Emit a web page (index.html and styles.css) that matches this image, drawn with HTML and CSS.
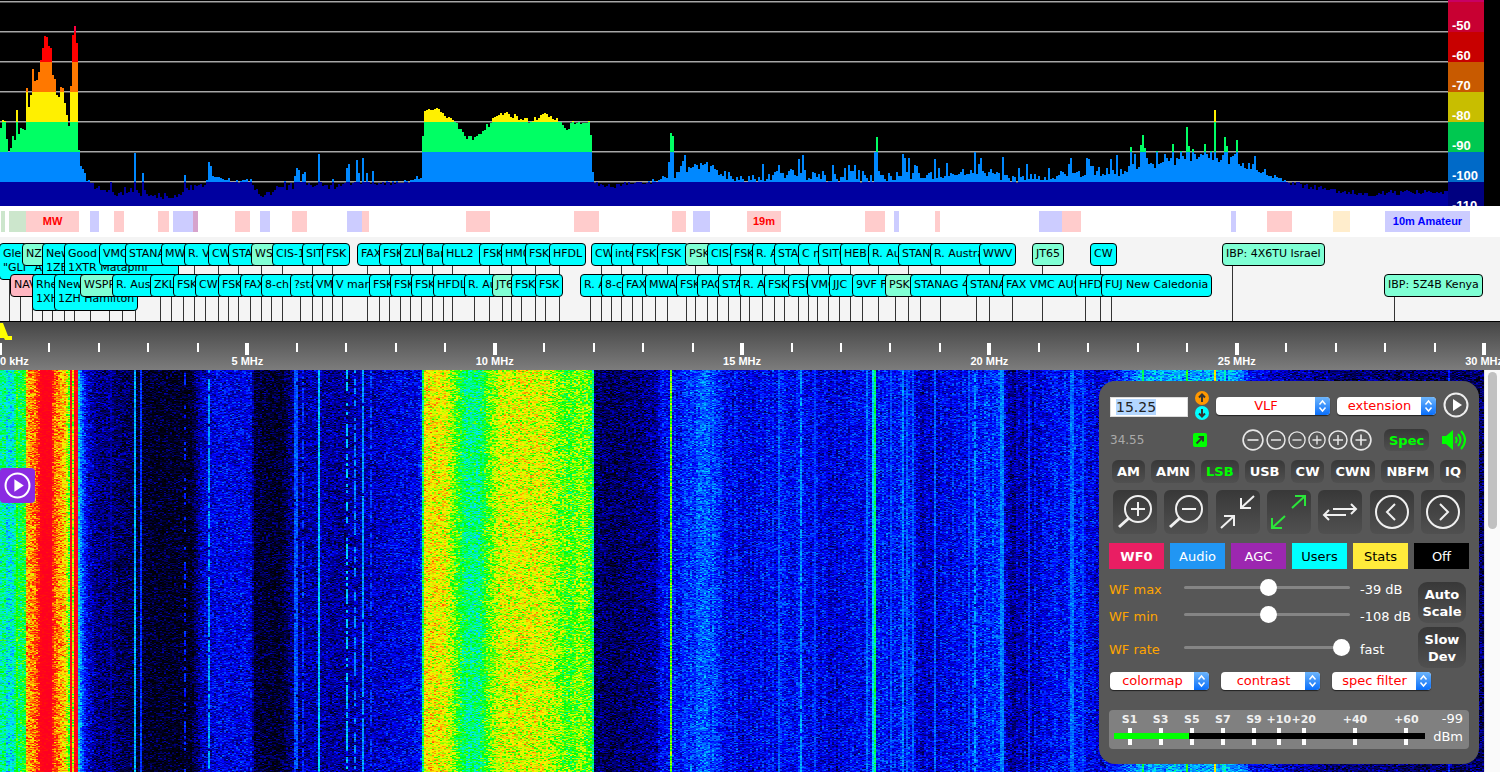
FILE: index.html
```
<!DOCTYPE html>
<html lang="en">
  <head>
    <meta charset="UTF-8" />
    <meta name="viewport" content="width=device-width, initial-scale=1.0" />
    <title>SDR receiver</title>
    <link rel="stylesheet" href="styles.css" />
  </head>
  <body>
    <svg class="symbols" aria-hidden="true">
      <symbol id="updown" viewBox="0 0 14 18">
        <path d="M4 7.500 7 4l3 3.500M4 10.500 7 14l3-3.500" />
      </symbol>
      <symbol id="minus" viewBox="0 0 20 20">
        <circle cx="10" cy="10" r="9" />
        <path d="M5 10h10" />
      </symbol>
      <symbol id="plus" viewBox="0 0 20 20">
        <circle cx="10" cy="10" r="9" />
        <path d="M5 10h10M10 5v10" />
      </symbol>
      <symbol id="play" viewBox="0 0 26 26">
        <circle cx="13" cy="13" r="11.500" />
        <path class="solid" d="M10 7v12l9-6z" />
      </symbol>
    </svg>

    <section class="spectrum">
      <canvas id="spectrum"></canvas>
      <div class="db-scale">
        <span></span>
        <span>-50</span>
        <span>-60</span>
        <span>-70</span>
        <span>-80</span>
        <span>-90</span>
        <span>-100</span>
        <span>-110</span>
      </div>
    </section>

    <section class="bands" id="bands"></section>
    <section class="dx" id="dx"></section>
    <section class="scale" id="scale">
      <svg class="passband" width="14" height="20">
        <path d="M0 1h3l5 13h4v4H5l-1-2H0z" />
      </svg>
    </section>

    <main class="waterfall">
      <canvas id="waterfall"></canvas>
      <div class="scrollbar"><i></i></div>

      <button class="opener" type="button" aria-label="Open">
        <svg><use href="#play" /></svg>
      </button>

      <form class="panel">
        <div class="row tune">
          <input id="freq" type="text" value="15.25" aria-label="Frequency" />
          <div class="steps">
            <button type="button" aria-label="Up" class="up">
              <svg viewBox="0 0 14 14"><path d="M7 11V3.500M4 6.500l3-3 3 3" /></svg>
            </button>
            <button type="button" aria-label="Down" class="down">
              <svg viewBox="0 0 14 14"><path d="M7 3v7.500M4 7.500l3 3 3-3" /></svg>
            </button>
          </div>
          <span class="select wide">
            <select aria-label="Band"><option>VLF</option></select>
            <svg><use href="#updown" /></svg>
          </span>
          <span class="select">
            <select aria-label="Extension"><option>extension</option></select>
            <svg><use href="#updown" /></svg>
          </span>
          <button type="button" class="play" aria-label="Play">
            <svg><use href="#play" /></svg>
          </button>
        </div>

        <div class="row status">
          <span class="cursor">34.55</span>
          <button type="button" class="link" aria-label="Link">
            <svg viewBox="0 0 14 14"><path d="M3.500 10.500 10 4M5.500 4H10v4.500" /></svg>
          </button>
          <div class="zoomers">
            <button type="button" class="l" aria-label="-3"><svg><use href="#minus" /></svg></button>
            <button type="button" class="m" aria-label="-2"><svg><use href="#minus" /></svg></button>
            <button type="button" class="s" aria-label="-1"><svg><use href="#minus" /></svg></button>
            <button type="button" class="s" aria-label="+1"><svg><use href="#plus" /></svg></button>
            <button type="button" class="m" aria-label="+2"><svg><use href="#plus" /></svg></button>
            <button type="button" class="l" aria-label="+3"><svg><use href="#plus" /></svg></button>
          </div>
          <button type="button" class="key on">Spec</button>
          <button type="button" class="mute" aria-label="Mute">
            <svg viewBox="0 0 26 22">
              <path class="solid" d="M1 7h4l7-6v20l-7-6H1z" />
              <path d="M14.500 8q2.500 3 0 6M17 5q5 6 0 12M20 2q8 9 0 18" />
            </svg>
          </button>
        </div>

        <div class="row modes">
          <button type="button" class="key">AM</button>
          <button type="button" class="key">AMN</button>
          <button type="button" class="key on">LSB</button>
          <button type="button" class="key">USB</button>
          <button type="button" class="key">CW</button>
          <button type="button" class="key">CWN</button>
          <button type="button" class="key">NBFM</button>
          <button type="button" class="key">IQ</button>
        </div>

        <div class="row tools">
          <button type="button" class="key" aria-label="Zoom in">
            <svg viewBox="0 0 44 44"><circle cx="25" cy="19" r="13" /><path d="M25 12v14M18 19h14" /><path class="thick" d="M15.500 28.500 6 37" /></svg>
          </button>
          <button type="button" class="key" aria-label="Zoom out">
            <svg viewBox="0 0 44 44"><circle cx="25" cy="19" r="13" /><path d="M18 19h14" /><path class="thick" d="M15.500 28.500 6 37" /></svg>
          </button>
          <button type="button" class="key" aria-label="Max in">
            <svg viewBox="0 0 44 44"><path d="M38 6 25 18M25 8v10h10M5 38l13-12M8 26h10v10" /></svg>
          </button>
          <button type="button" class="key on" aria-label="Max out">
            <svg viewBox="0 0 44 44"><path d="M25 18 38 6M28 6h10v10M18 26 5 38M5 28v10h10" /></svg>
          </button>
          <button type="button" class="key" aria-label="Swap">
            <svg viewBox="0 0 44 44"><path d="M15 19h23M33 14l5 5-5 5M28 25H6M11 20l-5 5 5 5" /></svg>
          </button>
          <button type="button" class="key" aria-label="Page left">
            <svg viewBox="0 0 44 44"><circle cx="22" cy="22" r="16" /><path d="m25 14-8 8 8 8" /></svg>
          </button>
          <button type="button" class="key" aria-label="Page right">
            <svg viewBox="0 0 44 44"><circle cx="22" cy="22" r="16" /><path d="m19 14 8 8-8 8" /></svg>
          </button>
        </div>

        <div class="row tabs">
          <button type="button" class="wf">WF0</button>
          <button type="button" class="audio">Audio</button>
          <button type="button" class="agc">AGC</button>
          <button type="button" class="users">Users</button>
          <button type="button" class="stats">Stats</button>
          <button type="button" class="off">Off</button>
        </div>

        <div class="row sliders">
          <div class="levels">
            <div class="level">
              <label for="wf-max">WF max</label>
              <input id="wf-max" type="range" value="51" />
              <output for="wf-max">-39 dB</output>
            </div>
            <div class="level">
              <label for="wf-min">WF min</label>
              <input id="wf-min" type="range" value="51" />
              <output for="wf-min">-108 dB</output>
            </div>
            <div class="level last">
              <label for="wf-rate">WF rate</label>
              <input id="wf-rate" type="range" value="4" max="4" />
              <output for="wf-rate">fast</output>
            </div>
          </div>
          <div class="side">
            <button type="button" class="key">Auto<br />Scale</button>
            <button type="button" class="key">Slow<br />Dev</button>
          </div>
        </div>

        <div class="row menus">
          <span class="select">
            <select aria-label="Colormap"><option>colormap</option></select>
            <svg><use href="#updown" /></svg>
          </span>
          <span class="select">
            <select aria-label="Contrast"><option>contrast</option></select>
            <svg><use href="#updown" /></svg>
          </span>
          <span class="select">
            <select aria-label="Spectrum filter"><option>spec filter</option></select>
            <svg><use href="#updown" /></svg>
          </span>
        </div>

        <div class="smeter">
          <div class="gauge" id="gauge"><div class="bar"><i></i></div></div>
          <div class="dbm">-99<br />dBm</div>
        </div>
      </form>
    </main>

    <script src="app.js"></script>
  </body>
</html>
```
FILE: styles.css
```
* {
  box-sizing: border-box;
}

body {
  margin: 0;
  height: 100vh;
  display: flex;
  flex-direction: column;
  overflow: hidden;
  background: white;
  font-family: "DejaVu Sans", Verdana, sans-serif;
  font-size: 13px;
}

button,
input,
select {
  font: inherit;
  margin: 0;
  padding: 0;
  border: 0;
}

button {
  background: none;
  color: white;
}

svg {
  display: block;
  fill: none;
  stroke: white;
  stroke-width: 2;
}

.solid {
  fill: white;
  stroke: none;
}

.symbols {
  position: absolute;
  width: 0;
  height: 0;
}

canvas {
  display: block;
}

/* spectrum */
.spectrum {
  display: flex;
  height: 206px;
  padding-right: 16px;
  background: black;
  overflow: hidden;
}

.spectrum canvas {
  flex: 1;
  min-width: 0;
  height: 206px;
}

.db-scale {
  width: 36px;
  color: white;
  font: bold 13px/13px "Liberation Sans", Arial, sans-serif;
}

.db-scale span {
  display: flex;
  align-items: flex-end;
  height: 30px;
  padding-left: 4px;
}

.db-scale span:nth-child(1) { height: 2px; background: #c80064; }
.db-scale span:nth-child(2) { background: #c80032; }
.db-scale span:nth-child(3) { background: #c80000; }
.db-scale span:nth-child(4) { background: #c85a00; }
.db-scale span:nth-child(5) { background: #c8be00; }
.db-scale span:nth-child(6) { background: #00c850; }
.db-scale span:nth-child(7) { background: #006ac8; }
.db-scale span:nth-child(8) { background: #000080; }

/* band bars */
.bands {
  position: relative;
  height: 31px;
}

.band {
  position: absolute;
  top: 5px;
  height: 21px;
  font: bold 11px/21px "Liberation Sans", Arial, sans-serif;
  text-align: center;
  white-space: nowrap;
}

.band.red { background: rgba(255, 0, 0, 0.2); color: red; }
.band.blue { background: rgba(0, 0, 255, 0.2); color: blue; }
.band.green { background: rgba(0, 128, 0, 0.2); }
.band.orange { background: rgba(255, 165, 0, 0.2); }

/* station labels */
.dx {
  position: relative;
  isolation: isolate;
  height: 84px;
  background: #f4f4f4;
  overflow: hidden;
}

.station {
  position: absolute;
  top: 6px;
  padding: 3px 3px 4px;
  border: 1px solid black;
  border-radius: 4px;
  background: cyan;
  font-size: 11px;
  line-height: 14px;
  white-space: pre;
}

.station.low {
  top: 37px;
}

.station.mint { background: aquamarine; }
.station.pink { background: lightpink; }

/* stem down to the frequency scale, behind every label */
.station::before {
  content: "";
  position: absolute;
  z-index: -1;
  left: 9px;
  top: 10px;
  width: 1px;
  height: 80px;
  background: #333;
}

/* frequency scale */
.scale {
  position: relative;
  height: 49px;
  border-top: 1px solid black;
  background: linear-gradient(#464646, #7c7c7c);
  overflow: hidden;
}

.passband {
  position: absolute;
  fill: yellow;
  stroke: none;
}

.tick {
  position: absolute;
  top: 21px;
  width: 60px;
  margin-left: -30px;
  color: white;
  font: bold 11px/12px "Liberation Sans", Arial, sans-serif;
  text-align: center;
}

.tick::before {
  content: "";
  display: block;
  width: 2px;
  height: 9px;
  margin: 0 auto 4px;
  background: white;
}

.tick.major::before {
  width: 4px;
  height: 12px;
  margin-bottom: 0;
}

.tick.first {
  margin-left: 0;
  text-align: left;
}

.tick.first::before {
  margin-left: -2px;
}

/* waterfall */
.waterfall {
  position: relative;
  flex: 1;
  display: flex;
  min-height: 0;
}

.waterfall canvas {
  flex: 1;
  min-width: 0;
  height: 100%;
}

.scrollbar {
  width: 16px;
  padding: 2px 3px;
  border-left: 1px solid #e4e4e4;
  background: #fafafa;
}

.scrollbar i {
  display: block;
  height: 157px;
  border-radius: 5px;
  background: #c1c1c1;
}

.opener {
  position: absolute;
  left: 0;
  top: 98px;
  width: 35px;
  height: 35px;
  padding: 4px;
  border-radius: 4px;
  background: blueviolet;
}

.opener svg {
  width: 27px;
  height: 27px;
}

/* control panel */
.panel {
  position: absolute;
  right: 21px;
  bottom: 8px;
  width: 380px;
  padding: 10px 10px 15px;
  border-radius: 16px;
  background: #575757;
  color: white;
}

.row {
  display: flex;
  align-items: center;
}

.key {
  border-radius: 6px;
  background: linear-gradient(#383838, #505050);
  font-weight: bold;
}

.key.on {
  color: lime;
}

.tune {
  gap: 7px;
  height: 28px;
  padding-left: 1px;
}

#freq {
  width: 78px;
  height: 20px;
  margin-top: 4px;
  padding: 0 5px;
  border: 1px solid #ddd;
  background: white;
  color: #222;
  font-size: 14px;
  outline: none;
}

#freq::selection {
  background: #b4d7ff;
  color: #222;
}

.steps button {
  display: block;
  width: 14px;
  height: 14px;
  margin: 1px 0;
  border-radius: 50%;
}

.steps svg {
  stroke: #333;
}

.steps .up { background: #ff9800; }
.steps .down { background: cyan; }

.select {
  position: relative;
  width: 99px;
  height: 18px;
}

.select.wide {
  width: 114px;
}

.tune .select {
  margin-top: 2px;
}

.select select {
  display: block;
  appearance: none;
  width: 100%;
  height: 18px;
  padding-right: 14px;
  border-radius: 4px;
  background: white;
  box-shadow: 0 1px 1px #222;
  color: red;
  line-height: 18px;
  text-align-last: center;
}

.select svg {
  position: absolute;
  right: 0;
  top: 0;
  width: 15px;
  height: 18px;
  border-radius: 0 4px 4px 0;
  background: linear-gradient(#6db5fb, #0a6ffb);
  stroke-width: 1.5;
  pointer-events: none;
}

.play svg {
  width: 26px;
  height: 26px;
  stroke: #eee;
}

.status {
  height: 24px;
  margin-top: 9px;
}

.cursor {
  width: 84px;
  padding-left: 1px;
  color: #aaa;
  font-size: 12px;
}

.link {
  width: 14px;
  height: 14px;
  border-radius: 2px;
  background: lime;
}

.link svg {
  stroke: #333;
}

.zoomers {
  display: flex;
  align-items: center;
  gap: 2px;
  margin-left: 35px;
}

.zoomers svg {
  stroke: #e6e6e6;
  stroke-width: 1.5;
}

.zoomers .l svg { width: 22px; height: 22px; }
.zoomers .m svg { width: 20px; height: 20px; }
.zoomers .s svg { width: 18px; height: 18px; }

.status .key {
  height: 22px;
  margin: 0 12px;
  padding: 0 5px;
}

.mute svg {
  width: 26px;
  height: 22px;
  stroke: lime;
}

.mute .solid {
  fill: lime;
}

.modes {
  justify-content: space-between;
  margin-top: 8px;
  padding: 0 3px;
}

.modes .key {
  height: 23px;
  padding: 0 5px;
}

.tools {
  justify-content: space-between;
  margin-top: 7px;
  padding: 0 4px;
}

.tools .key {
  width: 44px;
  height: 44px;
}

.tools svg {
  stroke: #f0f0f0;
}

.tools .on svg {
  stroke: #2be53a;
}

.tools .thick {
  stroke-width: 3;
}

.tabs {
  gap: 6px;
  margin-top: 9px;
}

.tabs button {
  flex: 1;
  height: 26px;
}

.tabs .wf { background: #e91e63; font-weight: bold; }
.tabs .audio { background: #2196f3; }
.tabs .agc { background: #9c27b0; }
.tabs .users { background: cyan; color: black; }
.tabs .stats { background: #ffeb3b; color: black; }
.tabs .off { background: black; }

.sliders {
  align-items: flex-start;
  margin-top: 13px;
}

.levels {
  flex: 1;
}

.level {
  display: flex;
  align-items: center;
  height: 15px;
  margin-bottom: 12px;
}

.level.last {
  margin-top: 18px;
}

.level label {
  width: 75px;
  color: orange;
}

.level output {
  margin-left: 10px;
  white-space: nowrap;
}

.level input {
  appearance: none;
  width: 166px;
  height: 17px;
  margin-bottom: 4px;
  background: none;
}

.level input::-webkit-slider-runnable-track {
  height: 3px;
  border-radius: 2px;
  background: #858585;
}

.level input::-webkit-slider-thumb {
  appearance: none;
  width: 17px;
  height: 17px;
  margin-top: -7px;
  border-radius: 50%;
  background: white;
}

.side {
  display: flex;
  flex-direction: column;
  gap: 4px;
  width: 48px;
  margin-right: 3px;
}

.side .key {
  height: 41px;
  border-radius: 9px;
  line-height: 17px;
}

.menus {
  gap: 12px;
  margin-top: 3px;
  padding-left: 1px;
}

.smeter {
  display: flex;
  height: 39px;
  margin-top: 20px;
  border-radius: 4px;
  background: #808080;
}

.gauge {
  position: relative;
  flex: 1;
  margin-left: 5px;
}

.mark {
  position: absolute;
  top: 3px;
  width: 30px;
  margin-left: -15px;
  color: #f0f0f0;
  font-size: 11px;
  font-weight: bold;
  line-height: 13px;
  text-align: center;
}

.mark::after {
  content: "";
  display: block;
  width: 4px;
  height: 17px;
  margin: 2px auto 0;
  background: white;
}

.bar {
  position: absolute;
  z-index: 1;
  top: 23px;
  width: 100%;
  height: 6px;
  background: black;
}

.bar i {
  display: block;
  width: 24%;
  height: 6px;
  background: lime;
}

.dbm {
  width: 44px;
  padding-right: 6px;
  line-height: 18px;
  text-align: right;
}
```
FILE: app.js
```
// Horizontal positions are given on a 1500 unit wide display.
const SPAN = 1500;
const pct = (x) => (x / SPAN) * 100 + "%";

let seed = 7;
function rnd() {
  seed = (seed * 1664525 + 1013904223) >>> 0;
  return seed / 4294967296;
}

function add(parent, className, text, left) {
  const el = document.createElement("div");
  el.className = className;
  el.textContent = text;
  el.style.left = left;
  parent.appendChild(el);
  return el;
}

// ---- band bars: start, end, colour, name
const bands = [
  [1, 5, "green"], [9, 26, "green"], [26, 79, "red", "MW"], [90, 99, "blue"],
  [114, 124, "red"], [158, 169, "red"], [173, 198, "blue"], [193, 198, "red"],
  [235, 250, "red"], [260, 270, "blue"], [292, 307, "red"], [347, 362, "blue"],
  [362, 369, "red"], [466, 490, "red"], [574, 599, "red"], [672, 686, "red"],
  [693, 710, "blue"], [747, 781, "red", "19m"], [865, 885, "red"],
  [894, 899, "blue"], [935, 940, "red"], [1039, 1062, "blue"],
  [1062, 1081, "red"], [1231, 1236, "blue"], [1267, 1292, "red"],
  [1333, 1350, "orange"], [1385, 1470, "blue", "10m Amateur"],
];
for (const [from, to, color, name] of bands) {
  add(document.getElementById("bands"), "band " + color, name || "", pct(from)).style.width = pct(to - from);
}

// ---- station labels: position, text, colour
const high = [
  [-1, 'Glen\n"GLI" AU'], [22, "NZH", "mint"], [42, "News\n1ZB Z"],
  [64, "Good News Radio T\n1XTR Matapihi"], [99, "VMC"], [125, "STANAG"],
  [161, "MWA"], [184, "R. Va"], [208, "CW"], [228, "STAN"],
  [251, "WSP", "mint"], [272, "CIS-1"], [302, "SITO"], [322, "FSK"],
  [357, "FAX"], [379, "FSK"], [400, "ZLM"], [422, "Bar"], [442, "HLL2  "],
  [479, "FSK"], [501, "HM0"], [525, "FSK"], [549, "HFDL"], [591, "CW "],
  [611, "inte"], [632, "FSK "], [657, "FSK "], [685, "PSK", "mint"],
  [707, "CIS-"], [730, "FSK"], [752, "R. Au"], [774, "STAN"], [798, "C m"],
  [818, "SITO"], [840, "HEB "], [868, "R. Aus"], [898, "STANA"],
  [930, "R. Austra"], [979, "WWV"], [1032, "JT65", "mint"], [1090, "CW"],
  [1222, "IBP: 4X6TU Israel", "mint"],
];
const low = [
  [10, "NAV", "pink"], [32, "Rhe\n1XH"], [54, "News\n1ZH Hamilton"],
  [80, "WSPR", "mint"], [112, "R. Aust"], [150, "ZKL"], [173, "FSK"],
  [195, "CW "], [218, "FSK"], [240, "FAX"], [261, "8-ch "], [290, "?sta"],
  [312, "VMC"], [332, "V mark"], [369, "FSK"], [390, "FSK"], [411, "FSK"],
  [433, "HFDL"], [464, "R. Au"], [492, "JT6", "mint"], [511, "FSK"],
  [535, "FSK"], [580, "R. A"], [601, "8-ch"], [622, "FAX"], [645, "MWAR"],
  [676, "FSK"], [697, "PAC"], [718, "STA"], [739, "R. Au"], [764, "FSK"],
  [788, "FSK"], [807, "VMC"], [829, "JJC "], [852, "9VF F"],
  [885, "PSK ", "mint"], [910, "STANAG 4"], [966, "STANA"],
  [1002, "FAX VMC AUST"], [1075, "HFDL"], [1101, "FUJ New Caledonia"],
  [1384, "IBP: 5Z4B Kenya", "mint"],
];
const dx = document.getElementById("dx");
for (const [x, text, color] of high) add(dx, "station " + (color || ""), text, pct(x));
for (const [x, text, color] of low) add(dx, "station low " + (color || ""), text, pct(x));

// ---- frequency scale, 0 to 30 MHz
const scale = document.getElementById("scale");
for (let mhz = 0; mhz <= 30; mhz++) {
  const major = mhz % 5 == 0;
  const text = mhz == 0 ? "0 kHz" : major ? mhz + " MHz" : "";
  const className = "tick" + (major ? " major" : "") + (mhz == 0 ? " first" : "");
  add(scale, className, text, pct(mhz * 49.47));
}

// ---- s-meter marks, in percent of the bar
const marks = [
  ["S1", 5], ["S3", 15], ["S5", 25], ["S7", 35], ["S9", 45],
  ["+10", 53], ["+20", 61], ["+40", 77.5], ["+60", 94],
];
for (const [text, at] of marks) add(document.getElementById("gauge"), "mark", text, at + "%");

// linear interpolation in a list of points that is sorted by its first value
function at(points, x) {
  let i = 1;
  while (i < points.length - 1 && points[i][0] < x) i++;
  const [x0, y0] = points[i - 1];
  const [x1, y1] = points[i];
  const t = Math.min(1, Math.max(0, (x - x0) / (x1 - x0)));
  return y0 + (y1 - y0) * t;
}

// ---- spectrum
const trace = [
  [0, 128], [2, 120], [3, 113], [5, 128], [7, 150], [9, 154], [11, 142], [12, 136],
  [14, 140], [15, 134], [18, 134], [20, 128], [22, 129], [25, 130],
  [26, 88], [28, 107], [30, 95], [32, 69], [33, 82], [36, 80], [38, 72],
  [40, 60], [41, 52], [43, 43], [44, 36], [46, 37], [47, 45], [50, 48],
  [51, 67], [53, 83], [54, 79], [56, 95], [57, 111], [58, 97], [60, 87],
  [62, 88], [63, 95], [65, 110], [67, 119], [69, 133], [70, 86], [72, 35],
  [73, 131], [74, 26], [76, 43], [77, 149], [79, 151], [80, 166], [83, 170],
  [86, 180], [90, 184], [100, 190], [115, 194], [125, 192], [140, 194],
  [160, 198], [180, 195], [190, 191], [200, 186], [208, 181], [212, 178],
  [219, 176], [228, 179], [235, 183], [245, 179], [250, 180], [255, 190],
  [262, 195], [280, 190], [300, 185], [330, 187], [350, 184], [385, 183],
  [400, 182], [410, 180], [416, 178], [420, 179], [421, 170], [422, 134],
  [423, 112], [430, 108], [440, 111], [450, 120], [458, 127], [465, 137],
  [472, 138], [480, 132], [488, 125], [495, 116], [505, 113], [515, 117],
  [530, 121], [536, 119], [542, 112], [550, 118], [557, 118], [562, 127],
  [566, 129], [572, 123], [588, 123], [590, 134], [592, 171], [594, 184],
  [610, 186], [630, 183], [650, 182], [660, 179], [680, 173], [700, 167],
  [715, 170], [730, 178], [760, 179], [790, 173], [820, 178], [860, 179],
  [880, 178], [950, 174], [980, 173], [1010, 180], [1040, 177], [1060, 175],
  [1100, 174], [1120, 172], [1130, 168], [1145, 162], [1152, 168],
  [1160, 164], [1185, 160], [1200, 157], [1230, 161], [1245, 165],
  [1260, 172], [1280, 178], [1290, 183], [1310, 187], [1345, 192],
  [1370, 194], [1400, 192], [1445, 193],
];
const spikes = [
  [16, 110], [110, 182], [134, 166], [135, 153], [142, 173], [185, 175], [209, 162], [211, 166],
  [294, 176], [296, 168], [298, 170], [303, 174], [305, 172], [318, 154],
  [347, 168], [349, 164], [356, 160], [358, 173], [363, 158], [367, 173],
  [372, 171], [670, 133], [672, 136], [799, 159], [802, 155], [874, 152],
  [876, 137], [902, 154], [905, 158], [908, 158], [935, 159], [975, 152],
  [1002, 157], [1070, 158], [1110, 159], [1117, 155], [1131, 147],
  [1140, 145], [1143, 135], [1145, 148], [1157, 151], [1173, 144],
  [1186, 127], [1188, 146], [1192, 149], [1204, 144], [1215, 110],
  [1225, 137], [1236, 140],
];
const dbColors = ["#ff0080", "#ff0040", "#ff0000", "#ff7800", "#fff000", "#00ff64", "#0088ff", "#0000a0"];

function drawSpectrum() {
  const canvas = document.getElementById("spectrum");
  const w = (canvas.width = canvas.clientWidth);
  const h = (canvas.height = canvas.clientHeight);
  const k = document.body.clientWidth / SPAN;
  const ctx = canvas.getContext("2d");

  ctx.fillStyle = "black";
  ctx.fillRect(0, 0, w, h);
  for (let y = 1; y < h; y += 30) {
    ctx.fillStyle = "#a8a8a8";
    ctx.fillRect(0, y, w, 1);
    ctx.fillStyle = "#505050";
    ctx.fillRect(0, y + 1, w, 1);
  }

  for (let px = 0; px < w; px += 2) {
    const x = px / k;
    let y = at(trace, x);
    if (x > 660 && x < 1265) {
      y += 4 - rnd() * 9;
      if (rnd() < 0.22) y -= rnd() * 15;
    } else if (x > 84) {
      y += 2.5 - rnd() * 5;
      if (x < 420 && y > 185 && rnd() < 0.3) y -= rnd() * 6;
    }
    for (const [sx, sy] of spikes) {
      if (Math.floor(sx / 2) == Math.floor(x / 2)) y = Math.min(y, sy);
    }
    y = Math.round(y);
    for (let i = 0; i < dbColors.length; i++) {
      const top = Math.max(y, i == 0 ? 0 : 2 + (i - 1) * 30);
      const end = 2 + i * 30;
      if (end > top) {
        ctx.fillStyle = dbColors[i];
        ctx.fillRect(px, top, 2, end - top);
      }
    }
  }
}

// ---- waterfall: position, level
const floor = [
  [0, 0.56], [4, 0.57], [6, 0.5], [12, 0.52], [14, 0.57], [25, 0.64], [26, 0.85], [34, 0.89],
  [38, 0.97], [41, 1], [50, 1], [54, 0.91], [60, 0.86], [65, 0.81], [68, 0.68],
  [70, 0.66], [73, 0.8], [77, 0.62], [78, 0.48], [81, 0.36], [87, 0.23], [96, 0.17], [130, 0.12],
  [145, 0.08], [190, 0.07], [200, 0.21], [215, 0.25], [250, 0.25], [254, 0.1],
  [280, 0.08], [290, 0.16], [310, 0.2], [340, 0.18], [375, 0.22], [418, 0.26],
  [420, 0.3], [422, 0.6], [423, 0.8], [445, 0.78], [455, 0.68], [465, 0.58],
  [478, 0.58], [488, 0.69], [500, 0.76], [525, 0.77], [545, 0.76], [560, 0.7],
  [568, 0.67], [580, 0.71], [591, 0.66], [593, 0.5], [594, 0.14], [615, 0.13], [655, 0.18],
  [660, 0.27], [690, 0.31], [704, 0.36], [714, 0.33], [730, 0.26], [750, 0.25],
  [790, 0.29], [830, 0.24], [870, 0.27], [905, 0.3], [920, 0.23], [970, 0.28],
  [1000, 0.32], [1006, 0.26], [1012, 0.2], [1025, 0.21], [1050, 0.28],
  [1100, 0.25], [1120, 0.3], [1140, 0.42], [1200, 0.43], [1238, 0.42],
  [1250, 0.28], [1290, 0.2], [1340, 0.15], [1484, 0.13],
];
// position, width, level, share of the time that it is on
const carriers = [
  [16, 2, 0.66, 1], [70, 2, 1, 1], [74, 4, 1, 1], [110, 2, 0.2, 1],
  [134, 2, 0.45, 1], [141, 2, 0.32, 1], [184, 2, 0.3, 0.4], [209, 2, 0.42, 0.85],
  [295, 4, 0.35, 0.95], [303, 2, 0.32, 0.75], [318, 2, 0.46, 1],
  [347, 2, 0.46, 0.6], [355, 2, 0.4, 0.6], [363, 2, 0.42, 0.95],
  [371, 2, 0.33, 0.6], [671, 2, 0.7, 1], [779, 2, 0.36, 1], [801, 2, 0.42, 0.9],
  [814, 2, 0.33, 1], [867, 2, 0.38, 1], [873, 2, 0.48, 1], [875, 2, 0.6, 1],
  [890, 2, 0.35, 1], [902, 2, 0.4, 1], [907, 2, 0.36, 1], [912, 2, 0.36, 1],
  [935, 2, 0.37, 1], [975, 2, 0.42, 0.8], [968, 2, 0.34, 1], [1001, 4, 0.4, 1],
  [1028, 2, 0.32, 1], [1070, 4, 0.38, 1], [1083, 2, 0.34, 1], [1143, 2, 0.6, 1],
  [1186, 2, 0.65, 1], [1215, 2, 0.8, 1], [1225, 2, 0.55, 1], [1449, 2, 0.3, 1],
];
const palette = [
  [0, 0, 0, 0], [0.08, 0, 0, 30], [0.2, 0, 0, 170], [0.27, 0, 0, 255], [0.4, 0, 130, 255],
  [0.5, 0, 230, 255], [0.58, 0, 255, 120], [0.66, 0, 255, 0], [0.74, 200, 255, 0],
  [0.8, 255, 240, 0], [0.88, 255, 140, 0], [0.95, 255, 30, 0], [1, 255, 0, 32],
];
const lut = [];
for (let i = 0; i < 256; i++) {
  lut.push([1, 2, 3].map((c) => at(palette.map((p) => [p[0], p[c]]), i / 255)));
}

function drawWaterfall() {
  const canvas = document.getElementById("waterfall");
  const w = (canvas.width = canvas.clientWidth);
  const h = (canvas.height = canvas.clientHeight);
  const k = document.body.clientWidth / SPAN;
  const ctx = canvas.getContext("2d");
  const img = ctx.createImageData(w, h);

  for (let px = 0; px < w; px += 2) {
    const x = px / k;
    let base = at(floor, x);
    if (x > 660 && x < 1250) base += (rnd() - 0.5) * 0.06;
    const line = carriers.find((c) => {
      const start = Math.floor(c[0] / 2) * 2;
      return x >= start && x < start + c[1];
    });
    let on = true;
    for (let y = 0; y < h; y++) {
      let level = base;
      let noise = x > 38 && x < 52 ? 0.04 : 0.14;
      if (line) {
        if (y % 3 == 0) on = rnd() < line[3];
        if (on) {
          level = line[2];
          noise = 0.08;
        }
      }
      level += (rnd() + rnd() - 1) * noise;
      const c = lut[Math.round(Math.min(1, Math.max(0, level)) * 255)];
      for (let i = 0; i < 2 && px + i < w; i++) {
        const p = (y * w + px + i) * 4;
        img.data[p] = c[0];
        img.data[p + 1] = c[1];
        img.data[p + 2] = c[2];
        img.data[p + 3] = 255;
      }
    }
  }
  ctx.putImageData(img, 0, 0);
}

drawSpectrum();
drawWaterfall();

const freq = document.getElementById("freq");
freq.focus();
freq.select();
```
